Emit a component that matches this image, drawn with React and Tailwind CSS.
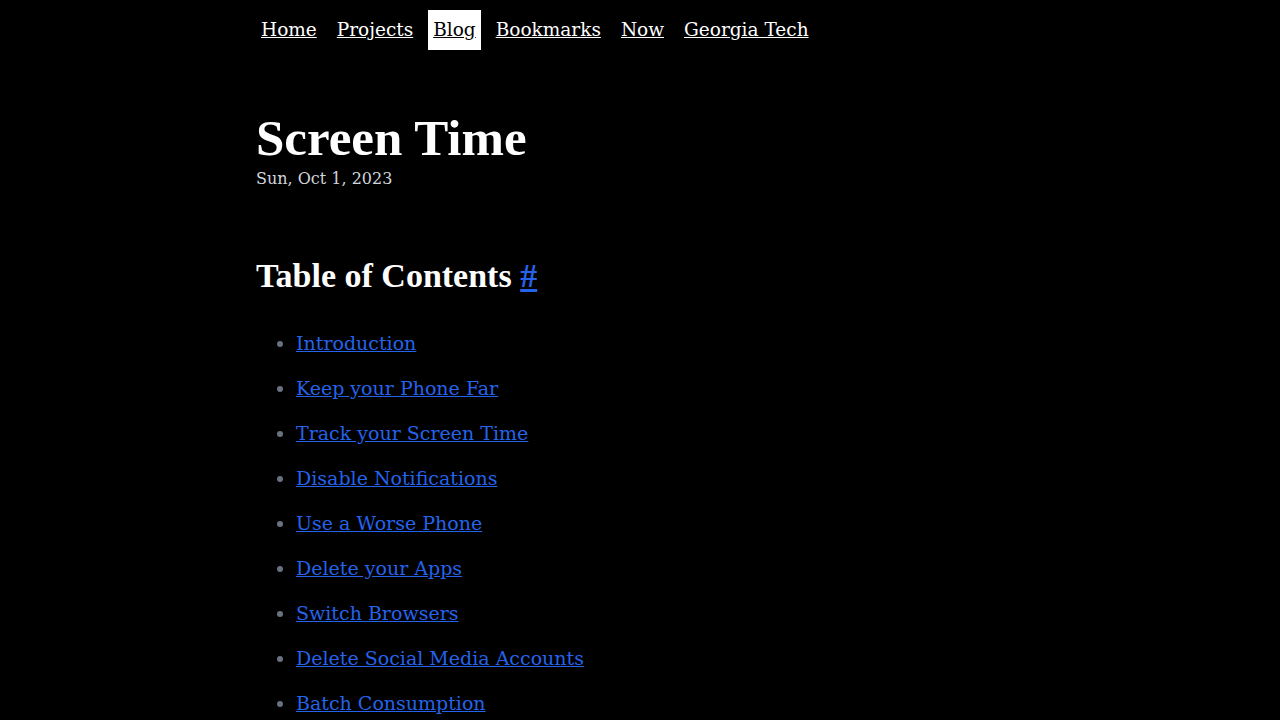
import React from "react";

const navLinks = ["Home", "Projects", "Blog", "Bookmarks", "Now", "Georgia Tech"];

const toc = [
  "Introduction",
  "Keep your Phone Far",
  "Track your Screen Time",
  "Disable Notifications",
  "Use a Worse Phone",
  "Delete your Apps",
  "Switch Browsers",
  "Delete Social Media Accounts",
  "Batch Consumption",
];

const heading = { fontFamily: '"Liberation Serif", "DejaVu Serif", serif' };

export default function App() {
  return (
    <div
      className="min-h-screen bg-black text-white"
      style={{ fontFamily: '"DejaVu Serif", "Liberation Serif", serif' }}
    >
      <div className="mx-auto max-w-3xl">
        {/* Nav */}
        <nav className="flex items-center gap-[10px] pt-[10px] text-[18.5px]">
          {navLinks.map((link) => (
            <a
              key={link}
              href="#"
              className={
                "flex h-[40px] items-center px-[5px] underline " +
                (link === "Blog" ? "bg-white text-black" : "text-white")
              }
            >
              {link}
            </a>
          ))}
        </nav>

        {/* Header */}
        <h1 style={heading} className="mt-[60px] text-[51px] font-bold leading-[56px]">
          Screen Time
        </h1>
        <p className="text-[16px] leading-[26px] text-gray-300">Sun, Oct 1, 2023</p>

        {/* TOC */}
        <h2 style={heading} className="mt-[64px] text-[34px] font-bold leading-[40px]">
          Table of Contents{" "}
          <a href="#" className="text-[#2563eb] underline">
            #
          </a>
        </h2>
        <ul className="mt-[33px] list-disc pl-[40px] text-[19px] marker:text-gray-500">
          {toc.map((item) => (
            <li key={item} className="mb-[17px] leading-[28px]">
              <a href="#" className="text-[#2563eb] underline">
                {item}
              </a>
            </li>
          ))}
        </ul>
      </div>
    </div>
  );
}
